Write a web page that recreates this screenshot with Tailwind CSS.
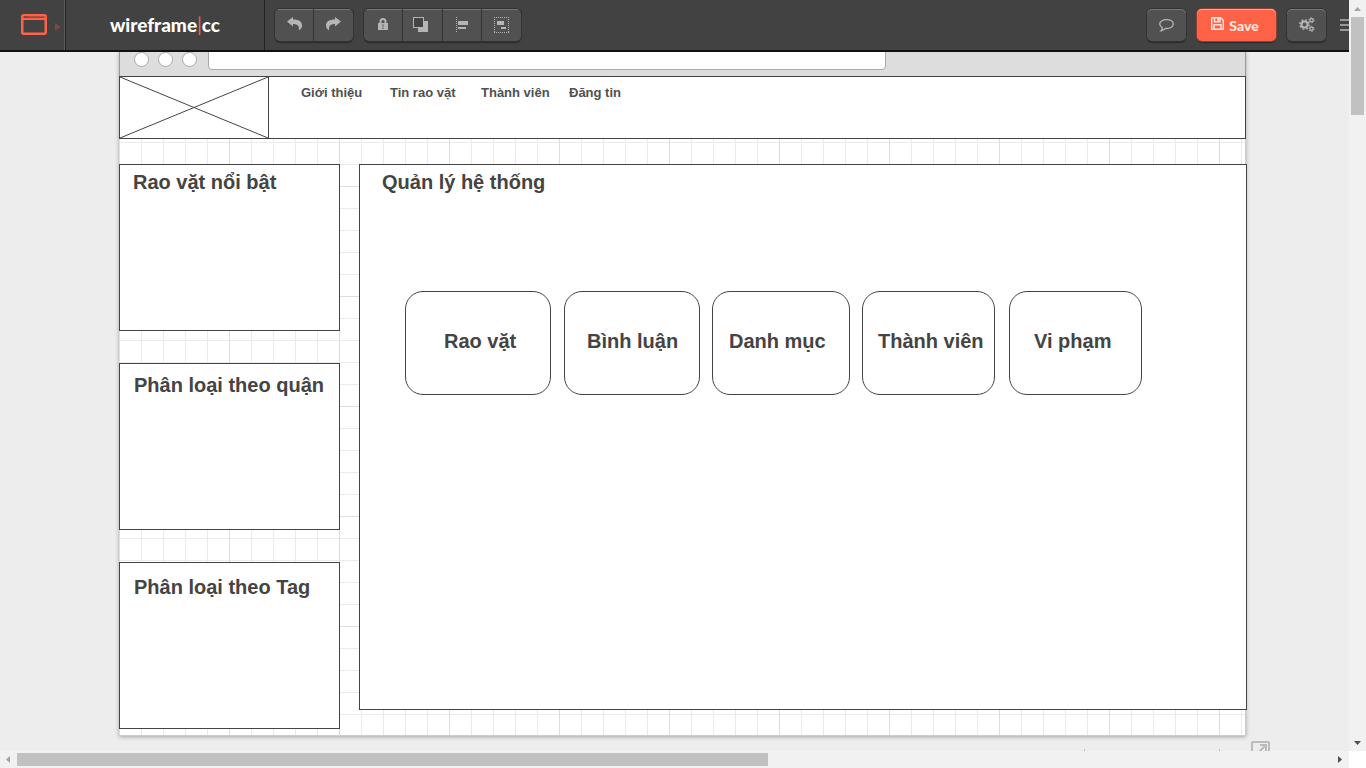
<!DOCTYPE html>
<html lang="vi">
<head>
<meta charset="utf-8">
<title>wireframe|cc</title>
<script src="https://cdn.jsdelivr.net/npm/@tailwindcss/browser@4"></script>
</head>
<body class="grid h-screen grid-cols-[minmax(0,1fr)_17px] grid-rows-[minmax(0,1fr)_17px] overflow-hidden bg-white font-['Liberation_Sans',Arial,sans-serif] text-[#444]">

<div class="flex min-h-0 flex-col overflow-hidden bg-[#ededed]">
  <header class="flex h-[52px] shrink-0 items-stretch overflow-hidden border-b-2 border-[#111] bg-[#424242] text-[#b5b5b5]">
    <button aria-label="Device" class="flex w-[66px] shrink-0 items-start border-r border-[#222] pt-3.5 pl-[21px] shadow-[inset_-1px_0_0_#5c5c5c]">
      <svg width="40" height="21" viewBox="0 0 40 21"><rect x="1.250" y="1.250" width="23.500" height="18.500" rx="1.500" fill="none" stroke="#ff6347" stroke-width="2.500"/><path d="M2 5h22" stroke="#ff6347" stroke-width="2"/><path d="M2.500 3h22" stroke="#c9513c"/><path d="M3 3h2M6 3h1" stroke="#424242"/><path d="M34 9v8l6-4z" fill="#7d483f"/></svg>
    </button>
    <a href="#" class="flex w-[199px] shrink-0 items-center justify-center border-r border-[#222] font-['Lato',sans-serif] text-[19px] font-black text-white"><span>wireframe<span class="font-normal text-[#ff6347]">|</span>cc</span></a>
    <div class="ml-[10px] flex gap-[11px] pt-[9px]">
      <div class="flex h-8 overflow-hidden rounded-[5px] shadow-[0_0_0_1px_#333,0_2px_1px_#2b2b2b]">
        <button aria-label="Undo" class="flex w-[39px] items-center justify-center border-r border-[#333] bg-[#515151] pb-[3px] shadow-[inset_0_1px_0_#777]"><svg width="15" height="13" viewBox="0 0 15 13" fill="currentColor"><path d="M0 4.500 6 0v2.500c6 0 9 2 9 6 0 1.800-.8 3.400-2.500 4.500h-.7c.9-4-1.300-6-5.800-6V9.500z"/></svg></button>
        <button aria-label="Redo" class="flex w-[39px] items-center justify-center bg-[#515151] pb-[3px] shadow-[inset_0_1px_0_#777]"><svg width="15" height="13" viewBox="0 0 15 13" fill="currentColor"><path d="M15 4.500 9 0v2.500C3 2.500 0 4.500 0 8.500c0 1.800.8 3.400 2.500 4.500h.7C2.300 9 4.500 7 9 7V9.500z"/></svg></button>
      </div>
      <div class="flex h-8 overflow-hidden rounded-[5px] shadow-[0_0_0_1px_#333,0_2px_1px_#2b2b2b]">
        <button aria-label="Lock" class="flex w-[39px] items-center justify-center border-r border-[#333] bg-[#515151] pb-[3px] shadow-[inset_0_1px_0_#777]"><svg width="10" height="12" viewBox="0 0 10 12"><path d="M2.500 6V3.500a2.500 2.500 0 0 1 5 0V6" fill="none" stroke="currentColor" stroke-width="2"/><path d="M0 5h10v7H0z" fill="currentColor"/><path d="M5 6.500v2M5 9.500v1.500" stroke="#444"/></svg></button>
        <button aria-label="Arrange" class="flex w-10 items-center justify-center border-r border-[#333] bg-[#515151] pr-1 pb-px shadow-[inset_0_1px_0_#777]"><svg width="15" height="15" viewBox="0 0 15 15"><path d="M11 4h4v11H5v-4h6z" fill="currentColor"/><rect x=".5" y=".5" width="10" height="10" fill="#444" stroke="currentColor"/></svg></button>
        <button aria-label="Align" class="flex w-[39px] items-center justify-center border-r border-[#333] bg-[#515151] pr-px pb-px shadow-[inset_0_1px_0_#777]"><svg width="12" height="16" viewBox="0 0 12 16"><path d="M.5 0v16" stroke="currentColor" stroke-dasharray="1 1"/><path d="M2 4h10v4H2zM2 10h8v2H2z" fill="currentColor"/></svg></button>
        <button aria-label="Group" class="flex w-[39px] items-center justify-center bg-[#515151] pb-px shadow-[inset_0_1px_0_#777]"><svg width="15" height="16" viewBox="0 0 15 16"><path d="M0 .5h15M0 15.500h15M.5 0v16M14.500 0v16" stroke="currentColor" stroke-dasharray="1 1"/><path d="M3 4h7v4H3zM7 10h5v2H7z" fill="currentColor"/></svg></button>
      </div>
    </div>
    <div class="ml-auto flex shrink-0 gap-[11px] pt-[9px]">
      <button aria-label="Comments" class="flex h-8 w-[39px] items-center justify-center rounded-[5px] bg-[#515151] shadow-[inset_0_1px_0_#777,0_0_0_1px_#333,0_2px_1px_#2b2b2b]"><svg width="15" height="13" viewBox="0 0 15 13" fill="none" stroke="currentColor" stroke-width="1.300"><path d="M7.500.7C3.700.7.7 2.600.7 5c0 1.500 1 2.700 2.500 3.500.2 1.300-.4 2.500-1.200 3.400 1.900-.3 3.300-1.200 4.300-2.500l1.200.1c3.800 0 6.800-2 6.800-4.500S11.300.7 7.500.7z"/></svg></button>
      <button class="flex h-8 w-[79px] items-center justify-center gap-[5px] rounded-[5px] bg-[#ff6347] pr-[3px] font-['Lato',sans-serif] text-[14px] font-black text-[#ffe4de] shadow-[inset_0_1px_0_#ffa594,0_0_0_1px_#8a4337,0_2px_1px_#2b2b2b]"><svg class="mb-1" width="13" height="13" viewBox="0 0 13 13" fill="none" stroke="currentColor" stroke-width="1.400"><path d="M.7.7h9l2.600 2.600v9H.7zM3 12V7.700h7V12M3.500.7v4h5.500v-4"/><path d="M7.300 1v3" stroke-width="2"/></svg>Save</button>
      <button aria-label="Settings" class="flex h-8 w-[39px] items-center justify-center rounded-[5px] bg-[#515151] pb-0.5 shadow-[inset_0_1px_0_#777,0_0_0_1px_#333,0_2px_1px_#2b2b2b]"><svg width="16" height="15" viewBox="0 0 16 15" fill="none" stroke="currentColor"><circle cx="5.500" cy="7.500" r="3" stroke-width="2"/><circle cx="5.500" cy="7.500" r="4.600" stroke-width="1.600" stroke-dasharray="1.810 1.810"/><circle cx="12.500" cy="3.200" r="1.600" stroke-width="1.300"/><circle cx="12.500" cy="3.200" r="2.600" stroke-width="1" stroke-dasharray="1.360 1.360"/><circle cx="12.500" cy="11.800" r="1.600" stroke-width="1.300"/><circle cx="12.500" cy="11.800" r="2.600" stroke-width="1" stroke-dasharray="1.360 1.360"/></svg></button>
      <button aria-label="Menu" class="ml-[3px] flex w-[9px] items-start overflow-hidden pt-2.5"><svg class="shrink-0" width="12" height="12" viewBox="0 0 12 12"><path d="M0 1h12M0 6h12M0 11h12" stroke="#999" stroke-width="2"/></svg></button>
    </div>
  </header>

  <div class="min-h-0 flex-1 overflow-hidden">
    <div class="mr-[103px] ml-[119px] flex min-h-[684px] flex-col shadow-[0_1px_4px_rgba(0,0,0,0.3)]">
      <div class="flex h-6 shrink-0 items-end overflow-hidden border-x border-[#999] bg-[#ddd] pb-1.5 pl-3.5">
        <div class="flex gap-[9px] pb-[3px]">
          <span class="size-[15px] rounded-full border border-[#aaa] bg-white"></span>
          <span class="size-[15px] rounded-full border border-[#aaa] bg-white"></span>
          <span class="size-[15px] rounded-full border border-[#aaa] bg-white"></span>
        </div>
        <input aria-label="Address" class="ml-[11px] h-6 w-[61%] rounded-[4px] border border-[#aaa] bg-white px-2 text-[13px] outline-none">
      </div>

      <div class="flex flex-1 flex-col border-r border-b border-[#ccc] bg-white bg-[linear-gradient(to_right,#ddd_1px,transparent_1px),linear-gradient(to_bottom,#ddd_1px,transparent_1px),linear-gradient(to_right,#ebebeb_1px,transparent_1px),linear-gradient(to_bottom,#ebebeb_1px,transparent_1px)] bg-[length:110px_110px,110px_110px,22px_22px,22px_22px]">
        <div class="-mr-px flex h-[63px] shrink-0 border border-[#444] bg-white">
          <svg class="w-[149px] shrink-0 border-r border-[#444]" height="61" viewBox="0 0 148 61" preserveAspectRatio="none"><path d="M0 0 148 61M0 61 148 0" stroke="#444" fill="none"/></svg>
          <nav class="flex pt-2 pl-8 text-[13px] leading-4 font-bold text-[#505050]">
            <a href="#" class="w-[89px]">Giới thiệu</a>
            <a href="#" class="w-[91px]">Tin rao vặt</a>
            <a href="#" class="w-[88px]">Thành viên</a>
            <a href="#">Đăng tin</a>
          </nav>
        </div>

        <div class="-mr-px flex items-start gap-[19px] pt-[25px]">
          <aside class="flex w-[221px] shrink-0 flex-col gap-8 text-[20px] leading-6 font-bold">
            <section class="h-[167px] border border-[#444] bg-white pt-[5px] pl-[13px]"><h2>Rao vặt nổi bật</h2></section>
            <section class="h-[167px] border border-[#444] bg-white pt-[9px] pl-3.5"><h2>Phân loại theo quận</h2></section>
            <section class="h-[167px] border border-[#444] bg-white pt-3 pl-3.5"><h2>Phân loại theo Tag</h2></section>
          </aside>
          <main class="-mr-px h-[546px] min-w-0 flex-1 border border-[#444] bg-white pt-[5px] text-[20px] leading-6 font-bold">
            <h1 class="pl-[22px]">Quản lý hệ thống</h1>
            <div class="mt-[97px] flex pl-[45px]">
              <button class="h-[104px] w-[146px] rounded-[18px] border border-[#444] pb-1 pl-[38px] text-left">Rao vặt</button>
              <button class="ml-[13px] h-[104px] w-[136px] rounded-[18px] border border-[#444] pb-1 pl-[22px] text-left">Bình luận</button>
              <button class="ml-3 h-[104px] w-[138px] rounded-[18px] border border-[#444] pb-1 pl-4 text-left">Danh mục</button>
              <button class="ml-3 h-[104px] w-[133px] rounded-[18px] border border-[#444] pb-1 pl-[15px] text-left">Thành viên</button>
              <button class="ml-[14px] h-[104px] w-[133px] rounded-[18px] border border-[#444] pb-1 pl-6 text-left">Vi phạm</button>
            </div>
          </main>
        </div>
      </div>
    </div>
    <footer class="mr-[79px] flex justify-end pt-[5px]">
      <span class="mt-2 mr-[134px] h-4 w-px bg-[#bbb]"></span>
      <span class="mt-2 mr-[31px] h-4 w-px bg-[#bbb]"></span>
      <button aria-label="Open" class="flex"><svg width="19" height="19" viewBox="0 0 19 19" fill="none" stroke="#bbb"><rect x="1" y="1" width="17" height="17" rx="1" stroke-width="2"/><path d="M9 4h6v6M14.500 4.500 6 13" stroke-width="2"/></svg></button>
    </footer>
  </div>
</div>

<div class="flex flex-col items-center bg-[#f1f1f1]">
  <svg class="shrink-0" width="17" height="17"><path d="M5 11h7L8.500 7z" fill="#a3a3a3"/></svg>
  <div class="h-[98px] w-[13px] bg-[#c1c1c1]"></div>
  <svg class="mt-auto shrink-0" width="17" height="17"><path d="M5 7h7l-3.500 4z" fill="#505050"/></svg>
</div>
<div class="flex items-center bg-[#f1f1f1]">
  <svg class="shrink-0" width="17" height="17"><path d="M10 5v7L6 8.500z" fill="#a3a3a3"/></svg>
  <div class="h-[13px] w-[55.7%] bg-[#c1c1c1]"></div>
  <svg class="ml-auto shrink-0" width="17" height="17"><path d="M6 5v7l4-3.500z" fill="#505050"/></svg>
</div>
</body>
</html>
